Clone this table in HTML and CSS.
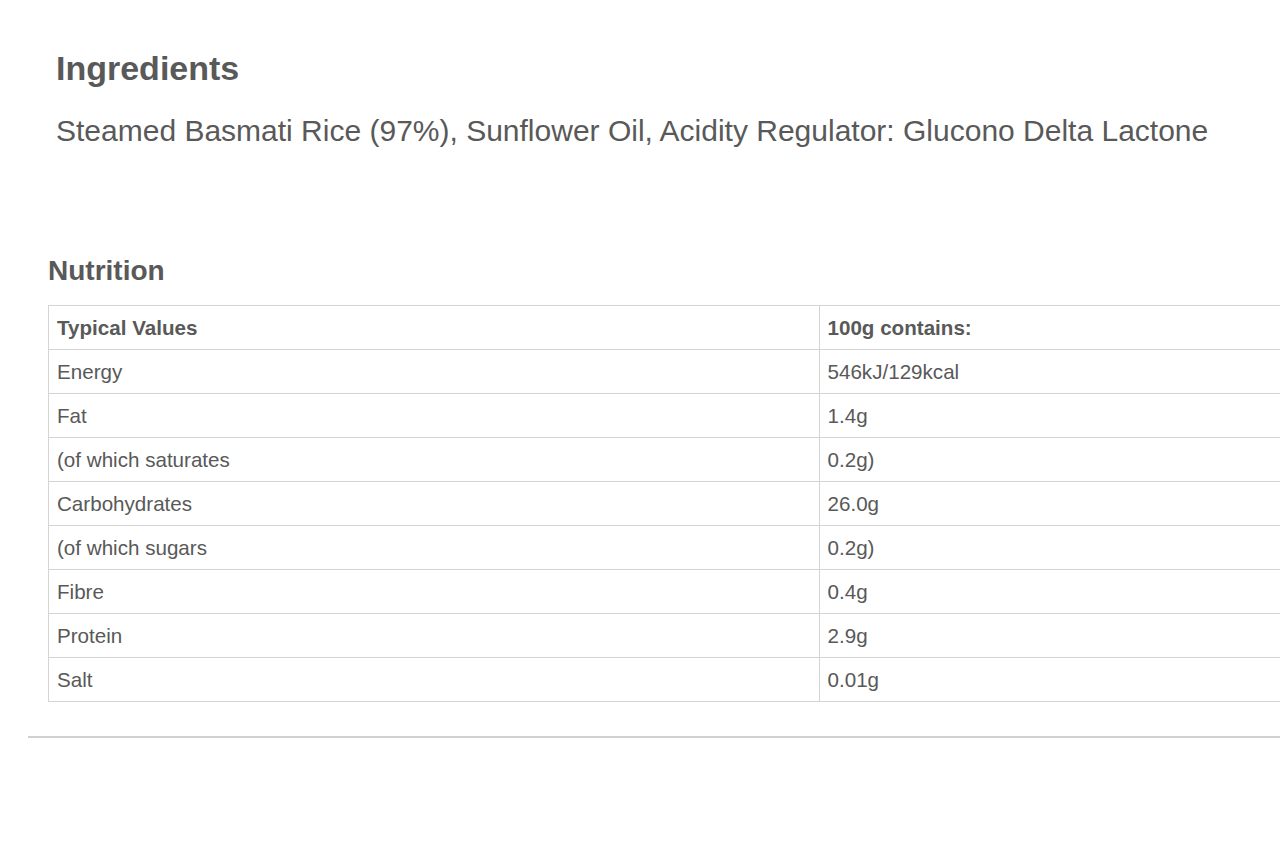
FILE: index.html
```html
<!DOCTYPE html>
<html lang="en">
<head>
<meta charset="utf-8">
<title>Ingredients and Nutrition</title>
<link rel="stylesheet" href="styles.css">
</head>
<body>
<main class="page">
  <section class="ingredients">
    <h2 class="ingredients-title">Ingredients</h2>
    <p class="ingredients-text">Steamed Basmati Rice (97%), Sunflower Oil, Acidity Regulator: Glucono Delta Lactone</p>
  </section>
  <section class="nutrition">
    <h3 class="nutrition-title">Nutrition</h3>
    <table class="nutrition-table">
      <thead>
        <tr><th>Typical Values</th><th>100g contains:</th></tr>
      </thead>
      <tbody>
        <tr><td>Energy</td><td>546kJ/129kcal</td></tr>
        <tr><td>Fat</td><td>1.4g</td></tr>
        <tr><td>(of which saturates</td><td>0.2g)</td></tr>
        <tr><td>Carbohydrates</td><td>26.0g</td></tr>
        <tr><td>(of which sugars</td><td>0.2g)</td></tr>
        <tr><td>Fibre</td><td>0.4g</td></tr>
        <tr><td>Protein</td><td>2.9g</td></tr>
        <tr><td>Salt</td><td>0.01g</td></tr>
      </tbody>
    </table>
  </section>
  <hr class="divider">
</main>
</body>
</html>
```
FILE: styles.css
```css
html, body {
  margin: 0;
  padding: 0;
  background: #ffffff;
  overflow: hidden;
}
body {
  font-family: "Liberation Sans", Arial, sans-serif;
  color: #595959;
}
.page {
  width: 1600px;
  padding-top: 48px;
}
.ingredients {
  padding-left: 56px;
}
.ingredients-title {
  margin: 0;
  font-size: 34px;
  line-height: 40px;
  font-weight: bold;
  color: #595959;
}
.ingredients-text {
  margin: 25px 0 0;
  font-size: 30px;
  line-height: 36px;
  color: #595959;
}
.nutrition {
  padding-left: 48px;
  margin-top: 106px;
}
.nutrition-title {
  margin: 0 0 18px;
  font-size: 28px;
  line-height: 32px;
  font-weight: bold;
  color: #595959;
}
.nutrition-table {
  width: 1542px;
  border-collapse: collapse;
  table-layout: fixed;
  border: 1px solid #d4d4d4;
}
.nutrition-table th,
.nutrition-table td {
  border: 1px solid #d4d4d4;
  height: 43px;
  padding: 0 8px;
  text-align: left;
  vertical-align: middle;
  font-size: 20.6px;
  color: #595959;
}
.nutrition-table th {
  font-weight: bold;
}
.divider {
  margin: 34px 0 0 28px;
  border: 0;
  border-top: 2px solid #d0d0d0;
}
```
